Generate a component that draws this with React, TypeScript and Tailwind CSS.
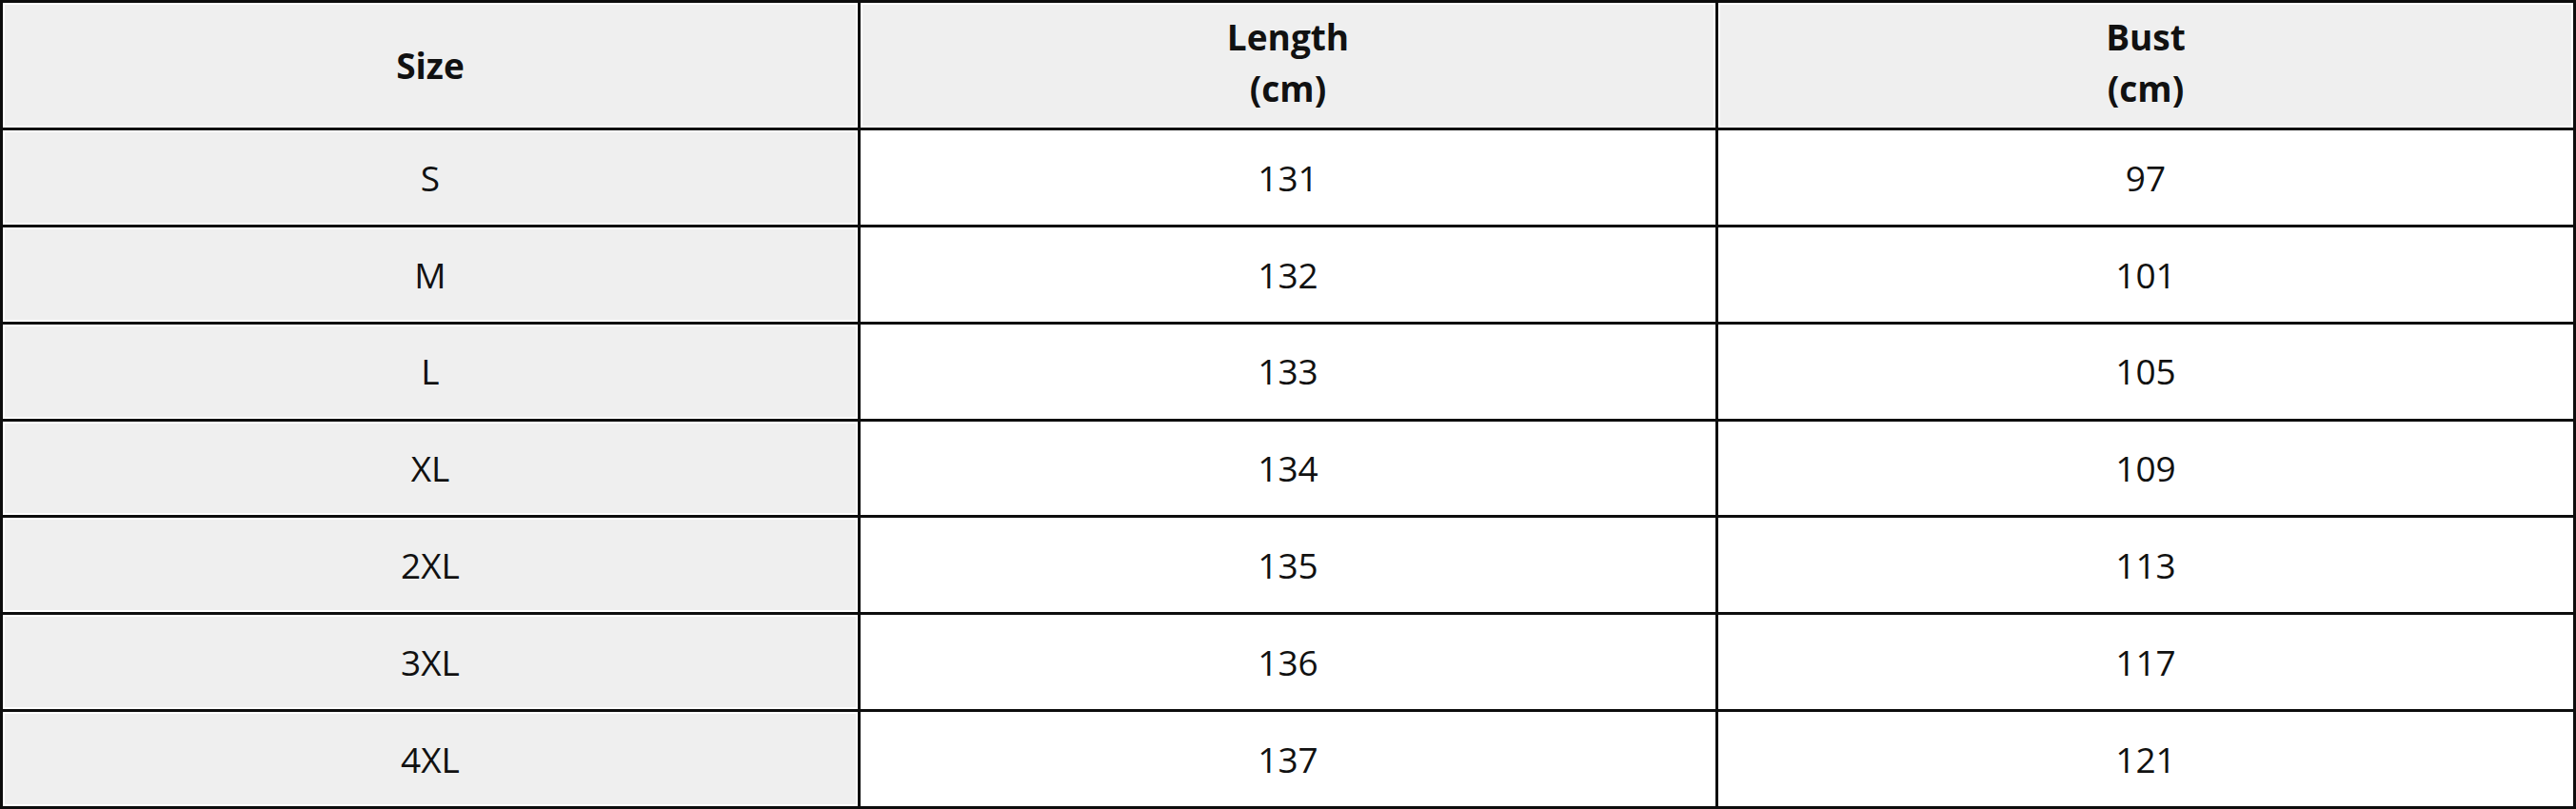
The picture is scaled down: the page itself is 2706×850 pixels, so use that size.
import React from "react";

const rows = [
  ["S", "131", "97"],
  ["M", "132", "101"],
  ["L", "133", "105"],
  ["XL", "134", "109"],
  ["2XL", "135", "113"],
  ["3XL", "136", "117"],
  ["4XL", "137", "121"],
];

export default function App() {
  return (
    <div
      className="w-[2706px] h-[850px] bg-[#0d0d0d] p-[3px] grid grid-cols-3 grid-rows-[131px_repeat(7,1fr)] gap-[3px] text-[37px] text-[#111]"
      style={{ fontFamily: '"Open Sans", "Noto Sans", sans-serif' }}
    >
      <div className="bg-[#efefef] border-2 border-white flex items-center justify-center font-bold">
        Size
      </div>
      <div className="bg-[#efefef] border-2 border-white flex flex-col items-center justify-center font-bold leading-[54px] pb-[6px]">
        <span>Length</span>
        <span>(cm)</span>
      </div>
      <div className="bg-[#efefef] border-2 border-white flex flex-col items-center justify-center font-bold leading-[54px] pb-[6px]">
        <span>Bust</span>
        <span>(cm)</span>
      </div>
      {rows.map((r) => (
        <React.Fragment key={r[0]}>
          <div className="bg-[#efefef] border-2 border-white flex items-center justify-center">
            {r[0]}
          </div>
          <div className="bg-white flex items-center justify-center">{r[1]}</div>
          <div className="bg-white flex items-center justify-center">{r[2]}</div>
        </React.Fragment>
      ))}
    </div>
  );
}
